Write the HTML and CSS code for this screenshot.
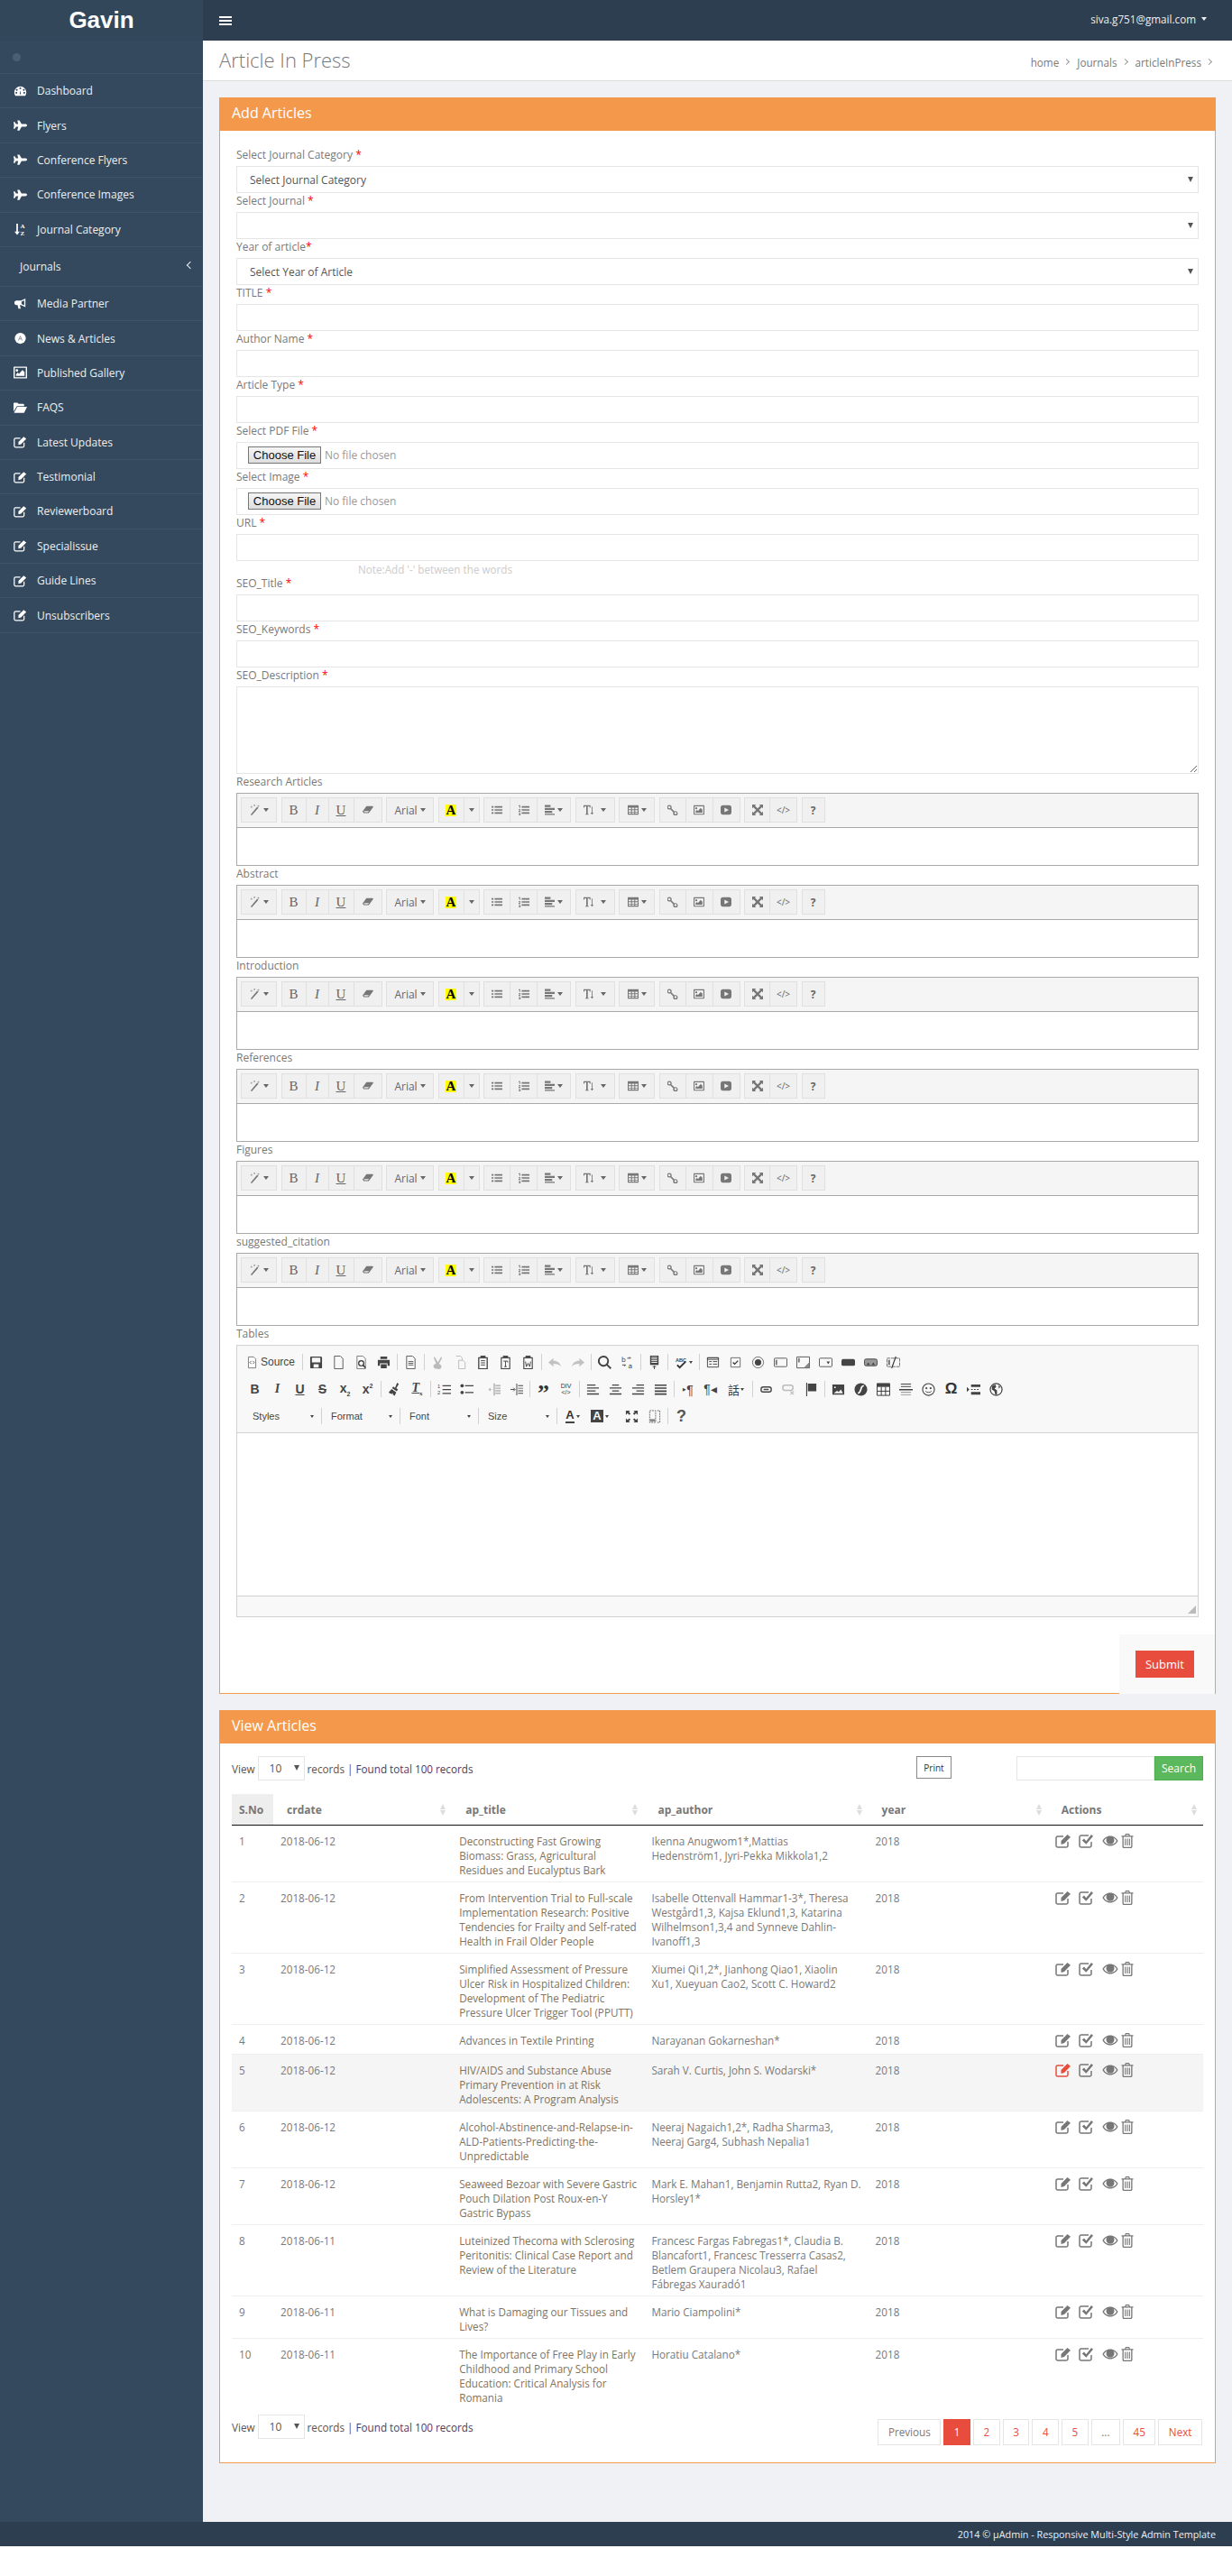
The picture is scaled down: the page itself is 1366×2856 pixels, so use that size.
FILE: index.html
```html
<!DOCTYPE html>
<html lang="en">
<head>
    <meta charset="UTF-8">
    <meta name="viewport" content="width=device-width, initial-scale=1.0">
    <title>Article In Press</title>
    <link rel="stylesheet" href="styles.css">
</head>
<body>
    <!-- icon set -->
    <svg class="icon-defs" xmlns="http://www.w3.org/2000/svg">
        <symbol id="i-dash" viewBox="0 0 16 16"><path fill-rule="evenodd" d="M8 2a7.6 7.600 0 0 0-7.600 7.600c0 1.700.5 3.200 1.400 4.400h12.400c.9-1.200 1.400-2.700 1.400-4.400A7.600 7.600 0 0 0 8 2zM7 3.500h2v2H7zM3.500 5l1.500 1.500-1.400 1.400L2.100 6.400zM12.500 5l1.400 1.400-1.500 1.500L11 6.500zM2 9h2v2H2zM12 9h2v2h-2zM7.200 12l.8-5 .8 5z"/></symbol>
        <symbol id="i-plane" viewBox="0 0 16 12"><path d="M0 2h1.500L3 4.500h2.500L4.500 0H7l2.500 4.500H14c1.100 0 2 .7 2 1.500s-.9 1.500-2 1.500H9.500L7 12H4.500l1-4.500H3L1.500 10H0l.7-4z"/></symbol>
        <symbol id="i-sort" viewBox="0 0 16 16"><path d="M3 1h2v10h2.400L4 15.500.6 11H3z"/></symbol>
        <symbol id="i-bull" viewBox="0 0 16 16"><path d="M14.500 1v11L9 9.300H7.500l1 4.700H5.700L4.600 9.300H3C1.600 9.300.5 8 .5 6.500S1.600 3.700 3 3.700h6zM13 3.500L9.500 5v3l3.500 1.600z"/></symbol>
        <symbol id="i-news" viewBox="0 0 16 16"><circle cx="8" cy="8" r="7"/><path d="M8 4.200l3 6.600H9.800L9.200 9.400H6.800l-.6 1.400H5zM7.300 8.300h1.400L8 6.500z" fill="#8d9aa8"/></symbol>
        <symbol id="i-pic" viewBox="0 0 16 14"><path fill-rule="evenodd" d="M1 0h14a1 1 0 0 1 1 1v12a1 1 0 0 1-1 1H1a1 1 0 0 1-1-1V1a1 1 0 0 1 1-1zm.500 1.500v11h13v-11zM4 3a1.500 1.500 0 1 1 0 3 1.500 1.500 0 0 1 0-3zm-1 8V9l2-2 1.500 1.500L10.500 4 13 6.500V11z"/></symbol>
        <symbol id="i-folder" viewBox="0 0 16 14"><path d="M0 2a1 1 0 0 1 1-1h3.500l1.500 1.500h5.500a1 1 0 0 1 1 1V5H4L0 11.500zM4.500 6H16l-3.500 7H.500z"/></symbol>
        <symbol id="i-edit" viewBox="0 0 18 16"><path d="M14 9v4.200a1.800 1.800 0 0 1-1.800 1.800H2.800A1.800 1.800 0 0 1 1 13.200V4.800A1.800 1.800 0 0 1 2.800 3H9" fill="none" stroke="currentColor" stroke-width="1.500"/><path d="M6.500 8L13.500 1 17 3.800 10 11l-3.500 1z"/></symbol>
        <symbol id="i-check" viewBox="0 0 18 16"><path d="M14 9v4.200a1.800 1.800 0 0 1-1.800 1.800H2.800A1.800 1.800 0 0 1 1 13.200V3.800A1.800 1.800 0 0 1 2.800 2H11" fill="none" stroke="currentColor" stroke-width="1.500"/><path d="M3.800 7.500L6 5.500l2.300 2.700L14 1l2 1.800-7.700 9z"/></symbol>
        <symbol id="i-eye" viewBox="0 0 18 14"><path fill-rule="evenodd" d="M9 1.500c4 0 7.200 2.700 8.600 5.500C16.200 9.800 13 12.500 9 12.500S1.800 9.800.400 7C1.800 4.200 5 1.500 9 1.500zM5.500 3.400C4 4.100 2.800 5.500 2 7c1.300 2.300 4 4.200 7 4.200s5.700-1.900 7-4.200c-.8-1.500-2-2.900-3.500-3.600.6.800 1 1.700 1 2.800a4.500 4.500 0 0 1-9 0c0-1.100.4-2 1-2.800z"/></symbol>
        <symbol id="i-trash" viewBox="0 0 14 16"><path fill-rule="evenodd" d="M5 0h4l1 2.200h3.500v1.400H12.500v10.600c0 1-.7 1.800-1.600 1.800H3.100c-.9 0-1.600-.8-1.600-1.800V3.600H.500V2.200H4zM5.600 1.300L5.300 2.200h3.400l-.3-.9zM2.800 3.600v10.600c0 .3.200.5.300.5h7.800c.1 0 .3-.2.300-.5V3.600zM4.200 5.500h1.100v7.500H4.200zM6.500 5.500h1.100v7.500H6.500zM8.800 5.500h1.100v7.500H8.800z"/></symbol>

        <!-- summernote toolbar -->
        <symbol id="n-magic" viewBox="0 0 14 14"><path d="M1 13L9.500 3l1.500 1.300L2.500 14z"/><path d="M11 0l.5 1.500L13 2l-1.500.5L11 4l-.5-1.500L9 2l1.500-.5zM5 0h2v2H5zM1 2h2v2H1z" opacity=".6"/></symbol>
        <symbol id="n-eraser" viewBox="0 0 14 12"><path d="M5 1h8l1 1-6 8H1.500L0 8zM2.300 7.500l-.6.8.7.7h4.500l1.500-1.500z"/></symbol>
        <symbol id="n-ul" viewBox="0 0 14 12"><path d="M0 1h2.500v2H0zM4 1h10v2H4zM0 5h2.500v2H0zM4 5h10v2H4zM0 9h2.500v2H0zM4 9h10v2H4z"/></symbol>
        <symbol id="n-ol" viewBox="0 0 14 14"><path d="M4 2h10v2H4zM4 6h10v2H4zM4 10h10v2H4zM0 1h2v3.500H1V2H0zM0 6h2.500v1L1 8.500h1.500v1H0v-1l1.500-1.500H0zM0 11h2.500v3.500H0v-1h1.500V13H.500v-.5h1V12H0z"/></symbol>
        <symbol id="n-align" viewBox="0 0 12 12"><path d="M0 0h7v2.500H0zM0 3.500h12V6H0zM0 7h9v2.500H0zM0 10.500h12V12H0z"/></symbol>
        <symbol id="n-size" viewBox="0 0 14 14"><path d="M0 1h9v3H8L7.500 2.200H5.500v9.800l1.300.5v.5H2.200v-.5l1.300-.5V2.200h-2L1 4H0z"/><path d="M10.500 2.500h1v8h1.500l-2 2.500-2-2.500h1.500z"/></symbol>
        <symbol id="n-table" viewBox="0 0 14 12"><path fill-rule="evenodd" d="M0 0h14v12H0zM1.200 3v2.200h3.200V3zm4.300 0v2.200h3V3zm4.200 0v2.200h3.100V3zM1.200 6.300v2.200h3.200V6.300zm4.300 0v2.200h3V6.300zm4.200 0v2.200h3.100V6.300zM1.200 9.500v1.300h3.200V9.500zm4.300 0v1.300h3V9.500zm4.200 0v1.300h3.100V9.500z"/></symbol>
        <symbol id="n-link" viewBox="0 0 14 14"><path d="M2.500 0.500a3 3 0 0 1 3 3c0 .5-.1 1-.4 1.400l3.900 3.900a3 3 0 1 1-1.300 1.300L3.800 6.200A3 3 0 1 1 2.500.500zm0 1.500a1.500 1.500 0 1 0 0 3 1.500 1.500 0 0 0 0-3zm8 7.500a1.500 1.500 0 1 0 0 3 1.500 1.500 0 0 0 0-3z" fill-rule="evenodd"/></symbol>
        <symbol id="n-video" viewBox="0 0 14 14"><path fill-rule="evenodd" d="M3 1h8a3 3 0 0 1 3 3v6a3 3 0 0 1-3 3H3a3 3 0 0 1-3-3V4a3 3 0 0 1 3-3zm2 3v6l5.500-3z"/></symbol>
        <symbol id="n-full" viewBox="0 0 14 14"><path d="M0 0h5L3.500 1.500 7 5l3.500-3.500L9 0h5v5l-1.500-1.500L9 7l3.500 3.500L14 9v5H9l1.500-1.500L7 9l-3.500 3.500L5 14H0V9l1.500 1.500L5 7 1.500 3.500 0 5z"/></symbol>

        <!-- ckeditor toolbar -->
        <symbol id="c-source" viewBox="0 0 16 16"><path d="M3 .5h7l3 3v12H3z" fill="#fff" stroke="#666"/><path d="M7 6L5 8l2 2M9 6l2 2-2 2" fill="none" stroke="#333"/></symbol>
        <symbol id="c-save" viewBox="0 0 16 16"><path fill-rule="evenodd" d="M2 1h12l1 1v12a1 1 0 0 1-1 1H2a1 1 0 0 1-1-1V2a1 1 0 0 1 1-1zm1 1.500V8h10V2.500zM5 10v4h6v-4z"/></symbol>
        <symbol id="c-new" viewBox="0 0 16 16"><path d="M3 .5h7l3 3v12H3z" fill="none" stroke="#555"/></symbol>
        <symbol id="c-preview" viewBox="0 0 16 16"><path d="M3 .5h7l3 3v12H3z" fill="none" stroke="#777"/><circle cx="8" cy="9" r="3" fill="none" stroke="#333" stroke-width="1.300"/><path d="M10 11l3 3.500" stroke="#333" stroke-width="1.600"/></symbol>
        <symbol id="c-print" viewBox="0 0 16 16"><path d="M4 1h8v3H4zM1 5h14v7h-2.500V9h-9v3H1zM4.500 10h7v5h-7z"/></symbol>
        <symbol id="c-doc" viewBox="0 0 16 16"><path d="M3 .5h7l3 3v12H3z" fill="none" stroke="#555"/><path d="M5 7h6M5 9h6M5 11h6" stroke="#555"/></symbol>
        <symbol id="c-cut" viewBox="0 0 16 16"><path d="M4 1l4 7 4-7 .8 2-3.800 7a3 3 0 1 1-1.500.5L8 9.500l-.5.500A3 3 0 1 1 6 9.500L3.200 3z" opacity=".35"/></symbol>
        <symbol id="c-copy" viewBox="0 0 16 16"><path d="M3 .5h5l2 2v3M6 5.500h5l2.500 2.500v7.500H6z" fill="none" stroke="#bbb"/></symbol>
        <symbol id="c-paste" viewBox="0 0 16 16"><path d="M5 0h6v2H5z"/><path d="M3 2.500h10v13H3z" fill="none" stroke="#444" stroke-width="1.400"/><path d="M5.500 6h5M5.500 8.500h5M5.500 11h5" stroke="#444"/></symbol>
        <symbol id="c-pastet" viewBox="0 0 16 16"><path d="M5 0h6v2H5z"/><path d="M3 2.500h10v13H3z" fill="none" stroke="#444" stroke-width="1.200"/><path d="M5.500 6.500h5v1.500M8 6.500V13M6.500 13h3" fill="none" stroke="#444"/></symbol>
        <symbol id="c-pastew" viewBox="0 0 16 16"><path d="M5 0h6v2H5z"/><path d="M3 2.500h10v13H3z" fill="none" stroke="#444" stroke-width="1.200"/><path d="M5 7l1 6 2-4 2 4 1-6" fill="none" stroke="#444"/></symbol>
        <symbol id="c-undo" viewBox="0 0 16 16"><path d="M6 3v3c5 0 8 2.500 9 7-1.700-2.500-4.500-3.500-9-3.500V13L0 8z" opacity=".3"/></symbol>
        <symbol id="c-redo" viewBox="0 0 16 16"><path d="M10 3v3C5 6 2 8.500 1 13c1.700-2.500 4.500-3.500 9-3.500V13l6-5z" opacity=".3"/></symbol>
        <symbol id="c-find" viewBox="0 0 16 16"><path fill-rule="evenodd" d="M6.500 0a6.500 6.500 0 0 1 5.200 10.300L16 14.500 14.500 16l-4.200-4.300A6.500 6.500 0 1 1 6.500 0zm0 2a4.500 4.500 0 1 0 0 9 4.500 4.500 0 0 0 0-9z"/></symbol>
        <symbol id="c-replace" viewBox="0 0 16 16"><path d="M8 3h4l-1.500-1.500M2 11h4l-1.500 1.500" fill="none" stroke="#444"/></symbol>
        <symbol id="c-all" viewBox="0 0 16 16"><path d="M3 0h10v11H3z"/><path d="M4.500 2h7M4.500 4h7M4.500 6h7M4.500 8h7" stroke="#f8f8f8"/><path d="M6 13h4M8 12v4" stroke="#444"/></symbol>
        <symbol id="c-spell" viewBox="0 0 16 16"><path d="M3 11l3 3 7-7" fill="none" stroke="#333" stroke-width="2"/></symbol>
        <symbol id="c-form" viewBox="0 0 16 16"><path d="M1.500 2.500h13v11h-13z" fill="none" stroke="#444"/><path d="M1.500 2.500h13v2h-13zM3.500 7h3M3.500 10h3M8 7h5M8 10h5" fill="none" stroke="#444"/></symbol>
        <symbol id="c-box" viewBox="0 0 16 16"><path d="M2.500 2.500h11v11h-11z" fill="none" stroke="#666"/><path d="M5 8l2 2 4-4" fill="none" stroke="#333" stroke-width="1.500"/></symbol>
        <symbol id="c-radio" viewBox="0 0 16 16"><circle cx="8" cy="8" r="6.500" fill="none" stroke="#666"/><circle cx="8" cy="8" r="3.800"/></symbol>
        <symbol id="c-field" viewBox="0 0 16 16"><rect x=".5" y="3" width="15" height="10" rx="1" fill="none" stroke="#555"/><path d="M3 5v6" stroke="#777" stroke-width="2"/></symbol>
        <symbol id="c-area" viewBox="0 0 16 16"><path d="M.5 1.500h15v13H.5z" fill="none" stroke="#555"/><path d="M3 3v5" stroke="#777" stroke-width="2"/><path d="M15 8v6H9z" fill="#888"/></symbol>
        <symbol id="c-select" viewBox="0 0 16 16"><rect x=".5" y="3" width="15" height="10" rx="1" fill="none" stroke="#555"/><path d="M9 7h4l-2 3z"/></symbol>
        <symbol id="c-btn" viewBox="0 0 16 16"><rect y="4" width="16" height="8" rx="2"/></symbol>
        <symbol id="c-imgbtn" viewBox="0 0 16 16"><rect x=".5" y="4" width="15" height="8" rx="2" fill="#999" stroke="#444"/><path d="M3 11l2-3 2 3zM9 11l2-3 2 3z"/></symbol>
        <symbol id="c-hidden" viewBox="0 0 16 16"><path d="M.5 3h15v10H.5z" fill="none" stroke="#666" stroke-dasharray="4 1"/><path d="M3 5v6" stroke="#666" stroke-width="2"/><path d="M11 1L6 15" stroke="#333" stroke-width="1.200"/></symbol>
        <symbol id="c-brush" viewBox="0 0 16 16"><path d="M11 0l2 1.500-3 5 2 1.500-1.500 2L5 6.500 6.500 4.500l2 1.500zM4.500 7.500l5.500 4-2 4-2-1.500 .5-2-1.500 1.500-1.500-1-.5.500L1 11.500z"/></symbol>
        <symbol id="c-ol" viewBox="0 0 16 16"><path d="M6 3h10v1.200H6zM6 7.500h10v1.200H6zM6 12h10v1.200H6z"/></symbol>
        <symbol id="c-ul" viewBox="0 0 16 16"><path d="M6 3h10v1.200H6zM6 11h10v1.200H6z"/><circle cx="2.500" cy="3.500" r="2"/><circle cx="2.500" cy="11.500" r="2"/></symbol>
        <symbol id="c-out" viewBox="0 0 16 16"><path d="M8 1h1v14H8zM10 3h6v1h-6zM10 6h6v1h-6zM10 9h6v1h-6zM10 12h6v1h-6zM7 8H2m2-2L2 8l2 2" fill="#aaa" stroke="#aaa" stroke-width=".4"/></symbol>
        <symbol id="c-in" viewBox="0 0 16 16"><path d="M8 1h1v14H8zM10 3h6v1h-6zM10 6h6v1h-6zM10 9h6v1h-6zM10 12h6v1h-6z" fill="#444"/><path d="M1 8h5M4.500 6L6.500 8l-2 2" fill="none" stroke="#444"/></symbol>
        <symbol id="c-left" viewBox="0 0 16 16"><path d="M1 2h10v1.500H1zM1 5.500h14V7H1zM1 9h10v1.500H1zM1 12.500h14V14H1z"/></symbol>
        <symbol id="c-center" viewBox="0 0 16 16"><path d="M4 2h8v1.500H4zM1 5.500h14V7H1zM4 9h8v1.500H4zM1 12.500h14V14H1z"/></symbol>
        <symbol id="c-right" viewBox="0 0 16 16"><path d="M6 2h9v1.500H6zM1 5.500h14V7H1zM6 9h9v1.500H6zM1 12.500h14V14H1z"/></symbol>
        <symbol id="c-just" viewBox="0 0 16 16"><path d="M1 2h14v1.800H1zM1 5.500h14v1.800H1zM1 9h14v1.800H1zM1 12.500h14v1.800H1z"/></symbol>
        <symbol id="c-chain" viewBox="0 0 16 16"><rect x="2" y="5" width="12" height="6" rx="2.500" fill="none" stroke="#444" stroke-width="1.500"/><path d="M5 8h6" stroke="#444" stroke-width="1.500"/></symbol>
        <symbol id="c-unchain" viewBox="0 0 16 16"><rect x="1" y="3" width="12" height="6" rx="2.500" fill="none" stroke="#bbb" stroke-width="1.600"/><path d="M10 10l4 4M14 10l-4 4" stroke="#bbb" stroke-width="1.300"/></symbol>
        <symbol id="c-flag" viewBox="0 0 16 16"><path d="M2 0h1.200v16H2zM4 1h10v9H4z"/></symbol>
        <symbol id="c-image" viewBox="0 0 16 16"><path fill-rule="evenodd" d="M1 2h14v12H1zM4 4.500a1 1 0 1 0 0 2 1 1 0 0 0 0-2zM2.500 12.500h11L11 8l-2.500 3-2-1.500z"/></symbol>
        <symbol id="c-flash" viewBox="0 0 16 16"><circle cx="8" cy="8" r="7.500"/><path d="M11.500 3.500C8.500 4 8.500 6 8 8S6.500 12 4.500 12.500" fill="none" stroke="#fff" stroke-width="1.800"/></symbol>
        <symbol id="c-table" viewBox="0 0 16 16"><path d="M.5 1h15v14H.5z" fill="none" stroke="#333"/><path d="M.5 1h15v4H.5z"/><path d="M.5 10h15M5.500 5v10M10.500 5v10" stroke="#333" fill="none"/></symbol>
        <symbol id="c-hr" viewBox="0 0 16 16"><path d="M2 1h12v1H2zM2 4h12v1H2zM0 7.500h16v1.500H0z"/><path d="M2 11h12v1H2zM2 14h12v1H2z" opacity=".6"/></symbol>
        <symbol id="c-smile" viewBox="0 0 16 16"><circle cx="8" cy="8" r="7" fill="none" stroke="#444" stroke-width="1.200"/><circle cx="5.500" cy="6.500" r="1.200"/><circle cx="10.500" cy="6.500" r="1.200"/><path d="M4.500 10c1.500 2 5.500 2 7 0" fill="none" stroke="#444"/></symbol>
        <symbol id="c-break" viewBox="0 0 16 16"><path d="M5 2h11v3H5zM5 11h11v3H5zM5 7.500h2v1H5zM8.500 7.500h2v1h-2zM12 7.500h2v1h-2zM0 5l3 3-3 3z"/></symbol>
        <symbol id="c-globe" viewBox="0 0 16 16"><circle cx="8" cy="8" r="7" fill="none" stroke="#444" stroke-width="1.300"/><path d="M3 4l4-2 1 3-2 2 3 2v5l-2 0-1-4-3-2zM11 3l2 2-2 2z"/></symbol>
        <symbol id="c-max" viewBox="0 0 16 16"><path d="M1 1h5L4.500 2.500 6.500 4.500 5 6 3 4 1 6zM15 1v5l-2-2-2 2-1.500-1.500 2-2L10 1zM1 15v-5l2 2 2-2 1.500 1.500-2 2L6 15zM15 15h-5l1.500-1.500-2-2L11 10l2 2 2-2z"/></symbol>
        <symbol id="c-blocks" viewBox="0 0 16 16"><path d="M2.500 1h7v14h-7zM11.500 1h3M11.500 15h3M14.500 1v14" fill="none" stroke="#666" stroke-dasharray="2 1"/><path d="M3 11h6v3H3z" fill="#888"/></symbol>
    </svg>

    <div class="layout">
        <!-- Sidebar -->
        <aside class="sidebar">
            <div class="logo">Gavin</div>
            <div class="user-dot-row"><span class="user-dot"></span></div>
            <ul class="side-nav">
                <li><svg class="side-icon"><use href="#i-dash"/></svg>Dashboard</li>
                <li><svg class="side-icon"><use href="#i-plane"/></svg>Flyers</li>
                <li><svg class="side-icon"><use href="#i-plane"/></svg>Conference Flyers</li>
                <li><svg class="side-icon"><use href="#i-plane"/></svg>Conference Images</li>
                <li><svg class="side-icon" viewBox="0 0 16 16"><use href="#i-sort"/><text x="8" y="7" class="icon-text">A</text><text x="8" y="15.500" class="icon-text">Z</text></svg>Journal Category</li>
                <li class="side-sub">Journals<span class="side-chev"></span></li>
                <li><svg class="side-icon"><use href="#i-bull"/></svg>Media Partner</li>
                <li><svg class="side-icon"><use href="#i-news"/></svg>News &amp; Articles</li>
                <li><svg class="side-icon"><use href="#i-pic"/></svg>Published Gallery</li>
                <li><svg class="side-icon"><use href="#i-folder"/></svg>FAQS</li>
                <li><svg class="side-icon"><use href="#i-edit"/></svg>Latest Updates</li>
                <li><svg class="side-icon"><use href="#i-edit"/></svg>Testimonial</li>
                <li><svg class="side-icon"><use href="#i-edit"/></svg>Reviewerboard</li>
                <li><svg class="side-icon"><use href="#i-edit"/></svg>Specialissue</li>
                <li><svg class="side-icon"><use href="#i-edit"/></svg>Guide Lines</li>
                <li><svg class="side-icon"><use href="#i-edit"/></svg>Unsubscribers</li>
            </ul>
        </aside>

        <div class="main">
            <!-- Top bar -->
            <header class="topbar">
                <div class="burger"><span></span><span></span><span></span></div>
                <div class="user-menu">siva.g751@gmail.com<span class="user-caret"></span></div>
            </header>

            <div class="title-bar">
                <h1>Article In Press</h1>
                <div class="breadcrumb">
                    <span>home</span><span class="crumb-chev"></span>
                    <span>Journals</span><span class="crumb-chev"></span>
                    <span>articleInPress</span><span class="crumb-chev"></span>
                </div>
            </div>

            <div class="content">
                <!-- Add Articles -->
                <section class="panel">
                    <h2 class="panel-head">Add Articles</h2>
                    <form class="article-form">
                        <label>Select Journal Category <span class="req">*</span></label>
                        <div class="select-wrap"><select class="field"><option>Select Journal Category</option></select></div>
                        <label>Select Journal <span class="req">*</span></label>
                        <div class="select-wrap"><select class="field"><option></option></select></div>
                        <label>Year of article<span class="req">*</span></label>
                        <div class="select-wrap"><select class="field"><option>Select Year of Article</option></select></div>
                        <label>TITLE <span class="req">*</span></label>
                        <input class="field" type="text">
                        <label>Author Name <span class="req">*</span></label>
                        <input class="field" type="text">
                        <label>Article Type <span class="req">*</span></label>
                        <input class="field" type="text">
                        <label>Select PDF File <span class="req">*</span></label>
                        <input class="field file-field" type="file">
                        <label>Select Image <span class="req">*</span></label>
                        <input class="field file-field" type="file">
                        <label>URL <span class="req">*</span></label>
                        <input class="field" type="text">
                        <p class="note">Note:Add '-' between the words</p>
                        <label>SEO_Title <span class="req">*</span></label>
                        <input class="field" type="text">
                        <label>SEO_Keywords <span class="req">*</span></label>
                        <input class="field" type="text">
                        <label>SEO_Description <span class="req">*</span></label>
                        <textarea class="field area-field"></textarea>

                        <label>Research Articles</label>
                        <div class="note-editor">
                            <div class="note-toolbar">
                                <div class="note-group"><button type="button" class="nb w40"><svg class="ni"><use href="#n-magic"/></svg><i class="car"></i></button></div>
                                <div class="note-group"><button type="button" class="nb w28 nb-serif"><b>B</b></button><button type="button" class="nb w25 nb-serif"><i>I</i></button><button type="button" class="nb w28 nb-serif"><u>U</u></button><button type="button" class="nb w31"><svg class="ni"><use href="#n-eraser"/></svg></button></div>
                                <div class="note-group"><button type="button" class="nb w53">Arial<i class="car"></i></button></div>
                                <div class="note-group"><button type="button" class="nb w29 nb-serif"><b class="hl">A</b></button><button type="button" class="nb w17"><i class="car"></i></button></div>
                                <div class="note-group"><button type="button" class="nb w30"><svg class="ni"><use href="#n-ul"/></svg></button><button type="button" class="nb w30"><svg class="ni"><use href="#n-ol"/></svg></button><button type="button" class="nb w37"><svg class="ni ni-s"><use href="#n-align"/></svg><i class="car"></i></button></div>
                                <div class="note-group"><button type="button" class="nb w44"><svg class="ni"><use href="#n-size"/></svg><i class="car car-far"></i></button></div>
                                <div class="note-group"><button type="button" class="nb w40"><svg class="ni"><use href="#n-table"/></svg><i class="car"></i></button></div>
                                <div class="note-group"><button type="button" class="nb w30"><svg class="ni"><use href="#n-link"/></svg></button><button type="button" class="nb w30"><svg class="ni"><use href="#i-pic"/></svg></button><button type="button" class="nb w30"><svg class="ni"><use href="#n-video"/></svg></button></div>
                                <div class="note-group"><button type="button" class="nb w29"><svg class="ni"><use href="#n-full"/></svg></button><button type="button" class="nb w30 nb-code">&lt;/&gt;</button></div>
                                <div class="note-group"><button type="button" class="nb w26"><b>?</b></button></div>
                            </div>
                            <div class="note-body"></div>
                        </div>

                        <label>Abstract</label>
                        <div class="note-editor">
                            <div class="note-toolbar">
                                <div class="note-group"><button type="button" class="nb w40"><svg class="ni"><use href="#n-magic"/></svg><i class="car"></i></button></div>
                                <div class="note-group"><button type="button" class="nb w28 nb-serif"><b>B</b></button><button type="button" class="nb w25 nb-serif"><i>I</i></button><button type="button" class="nb w28 nb-serif"><u>U</u></button><button type="button" class="nb w31"><svg class="ni"><use href="#n-eraser"/></svg></button></div>
                                <div class="note-group"><button type="button" class="nb w53">Arial<i class="car"></i></button></div>
                                <div class="note-group"><button type="button" class="nb w29 nb-serif"><b class="hl">A</b></button><button type="button" class="nb w17"><i class="car"></i></button></div>
                                <div class="note-group"><button type="button" class="nb w30"><svg class="ni"><use href="#n-ul"/></svg></button><button type="button" class="nb w30"><svg class="ni"><use href="#n-ol"/></svg></button><button type="button" class="nb w37"><svg class="ni ni-s"><use href="#n-align"/></svg><i class="car"></i></button></div>
                                <div class="note-group"><button type="button" class="nb w44"><svg class="ni"><use href="#n-size"/></svg><i class="car car-far"></i></button></div>
                                <div class="note-group"><button type="button" class="nb w40"><svg class="ni"><use href="#n-table"/></svg><i class="car"></i></button></div>
                                <div class="note-group"><button type="button" class="nb w30"><svg class="ni"><use href="#n-link"/></svg></button><button type="button" class="nb w30"><svg class="ni"><use href="#i-pic"/></svg></button><button type="button" class="nb w30"><svg class="ni"><use href="#n-video"/></svg></button></div>
                                <div class="note-group"><button type="button" class="nb w29"><svg class="ni"><use href="#n-full"/></svg></button><button type="button" class="nb w30 nb-code">&lt;/&gt;</button></div>
                                <div class="note-group"><button type="button" class="nb w26"><b>?</b></button></div>
                            </div>
                            <div class="note-body"></div>
                        </div>

                        <label>Introduction</label>
                        <div class="note-editor">
                            <div class="note-toolbar">
                                <div class="note-group"><button type="button" class="nb w40"><svg class="ni"><use href="#n-magic"/></svg><i class="car"></i></button></div>
                                <div class="note-group"><button type="button" class="nb w28 nb-serif"><b>B</b></button><button type="button" class="nb w25 nb-serif"><i>I</i></button><button type="button" class="nb w28 nb-serif"><u>U</u></button><button type="button" class="nb w31"><svg class="ni"><use href="#n-eraser"/></svg></button></div>
                                <div class="note-group"><button type="button" class="nb w53">Arial<i class="car"></i></button></div>
                                <div class="note-group"><button type="button" class="nb w29 nb-serif"><b class="hl">A</b></button><button type="button" class="nb w17"><i class="car"></i></button></div>
                                <div class="note-group"><button type="button" class="nb w30"><svg class="ni"><use href="#n-ul"/></svg></button><button type="button" class="nb w30"><svg class="ni"><use href="#n-ol"/></svg></button><button type="button" class="nb w37"><svg class="ni ni-s"><use href="#n-align"/></svg><i class="car"></i></button></div>
                                <div class="note-group"><button type="button" class="nb w44"><svg class="ni"><use href="#n-size"/></svg><i class="car car-far"></i></button></div>
                                <div class="note-group"><button type="button" class="nb w40"><svg class="ni"><use href="#n-table"/></svg><i class="car"></i></button></div>
                                <div class="note-group"><button type="button" class="nb w30"><svg class="ni"><use href="#n-link"/></svg></button><button type="button" class="nb w30"><svg class="ni"><use href="#i-pic"/></svg></button><button type="button" class="nb w30"><svg class="ni"><use href="#n-video"/></svg></button></div>
                                <div class="note-group"><button type="button" class="nb w29"><svg class="ni"><use href="#n-full"/></svg></button><button type="button" class="nb w30 nb-code">&lt;/&gt;</button></div>
                                <div class="note-group"><button type="button" class="nb w26"><b>?</b></button></div>
                            </div>
                            <div class="note-body"></div>
                        </div>

                        <label>References</label>
                        <div class="note-editor">
                            <div class="note-toolbar">
                                <div class="note-group"><button type="button" class="nb w40"><svg class="ni"><use href="#n-magic"/></svg><i class="car"></i></button></div>
                                <div class="note-group"><button type="button" class="nb w28 nb-serif"><b>B</b></button><button type="button" class="nb w25 nb-serif"><i>I</i></button><button type="button" class="nb w28 nb-serif"><u>U</u></button><button type="button" class="nb w31"><svg class="ni"><use href="#n-eraser"/></svg></button></div>
                                <div class="note-group"><button type="button" class="nb w53">Arial<i class="car"></i></button></div>
                                <div class="note-group"><button type="button" class="nb w29 nb-serif"><b class="hl">A</b></button><button type="button" class="nb w17"><i class="car"></i></button></div>
                                <div class="note-group"><button type="button" class="nb w30"><svg class="ni"><use href="#n-ul"/></svg></button><button type="button" class="nb w30"><svg class="ni"><use href="#n-ol"/></svg></button><button type="button" class="nb w37"><svg class="ni ni-s"><use href="#n-align"/></svg><i class="car"></i></button></div>
                                <div class="note-group"><button type="button" class="nb w44"><svg class="ni"><use href="#n-size"/></svg><i class="car car-far"></i></button></div>
                                <div class="note-group"><button type="button" class="nb w40"><svg class="ni"><use href="#n-table"/></svg><i class="car"></i></button></div>
                                <div class="note-group"><button type="button" class="nb w30"><svg class="ni"><use href="#n-link"/></svg></button><button type="button" class="nb w30"><svg class="ni"><use href="#i-pic"/></svg></button><button type="button" class="nb w30"><svg class="ni"><use href="#n-video"/></svg></button></div>
                                <div class="note-group"><button type="button" class="nb w29"><svg class="ni"><use href="#n-full"/></svg></button><button type="button" class="nb w30 nb-code">&lt;/&gt;</button></div>
                                <div class="note-group"><button type="button" class="nb w26"><b>?</b></button></div>
                            </div>
                            <div class="note-body"></div>
                        </div>

                        <label>Figures</label>
                        <div class="note-editor">
                            <div class="note-toolbar">
                                <div class="note-group"><button type="button" class="nb w40"><svg class="ni"><use href="#n-magic"/></svg><i class="car"></i></button></div>
                                <div class="note-group"><button type="button" class="nb w28 nb-serif"><b>B</b></button><button type="button" class="nb w25 nb-serif"><i>I</i></button><button type="button" class="nb w28 nb-serif"><u>U</u></button><button type="button" class="nb w31"><svg class="ni"><use href="#n-eraser"/></svg></button></div>
                                <div class="note-group"><button type="button" class="nb w53">Arial<i class="car"></i></button></div>
                                <div class="note-group"><button type="button" class="nb w29 nb-serif"><b class="hl">A</b></button><button type="button" class="nb w17"><i class="car"></i></button></div>
                                <div class="note-group"><button type="button" class="nb w30"><svg class="ni"><use href="#n-ul"/></svg></button><button type="button" class="nb w30"><svg class="ni"><use href="#n-ol"/></svg></button><button type="button" class="nb w37"><svg class="ni ni-s"><use href="#n-align"/></svg><i class="car"></i></button></div>
                                <div class="note-group"><button type="button" class="nb w44"><svg class="ni"><use href="#n-size"/></svg><i class="car car-far"></i></button></div>
                                <div class="note-group"><button type="button" class="nb w40"><svg class="ni"><use href="#n-table"/></svg><i class="car"></i></button></div>
                                <div class="note-group"><button type="button" class="nb w30"><svg class="ni"><use href="#n-link"/></svg></button><button type="button" class="nb w30"><svg class="ni"><use href="#i-pic"/></svg></button><button type="button" class="nb w30"><svg class="ni"><use href="#n-video"/></svg></button></div>
                                <div class="note-group"><button type="button" class="nb w29"><svg class="ni"><use href="#n-full"/></svg></button><button type="button" class="nb w30 nb-code">&lt;/&gt;</button></div>
                                <div class="note-group"><button type="button" class="nb w26"><b>?</b></button></div>
                            </div>
                            <div class="note-body"></div>
                        </div>

                        <label>suggested_citation</label>
                        <div class="note-editor">
                            <div class="note-toolbar">
                                <div class="note-group"><button type="button" class="nb w40"><svg class="ni"><use href="#n-magic"/></svg><i class="car"></i></button></div>
                                <div class="note-group"><button type="button" class="nb w28 nb-serif"><b>B</b></button><button type="button" class="nb w25 nb-serif"><i>I</i></button><button type="button" class="nb w28 nb-serif"><u>U</u></button><button type="button" class="nb w31"><svg class="ni"><use href="#n-eraser"/></svg></button></div>
                                <div class="note-group"><button type="button" class="nb w53">Arial<i class="car"></i></button></div>
                                <div class="note-group"><button type="button" class="nb w29 nb-serif"><b class="hl">A</b></button><button type="button" class="nb w17"><i class="car"></i></button></div>
                                <div class="note-group"><button type="button" class="nb w30"><svg class="ni"><use href="#n-ul"/></svg></button><button type="button" class="nb w30"><svg class="ni"><use href="#n-ol"/></svg></button><button type="button" class="nb w37"><svg class="ni ni-s"><use href="#n-align"/></svg><i class="car"></i></button></div>
                                <div class="note-group"><button type="button" class="nb w44"><svg class="ni"><use href="#n-size"/></svg><i class="car car-far"></i></button></div>
                                <div class="note-group"><button type="button" class="nb w40"><svg class="ni"><use href="#n-table"/></svg><i class="car"></i></button></div>
                                <div class="note-group"><button type="button" class="nb w30"><svg class="ni"><use href="#n-link"/></svg></button><button type="button" class="nb w30"><svg class="ni"><use href="#i-pic"/></svg></button><button type="button" class="nb w30"><svg class="ni"><use href="#n-video"/></svg></button></div>
                                <div class="note-group"><button type="button" class="nb w29"><svg class="ni"><use href="#n-full"/></svg></button><button type="button" class="nb w30 nb-code">&lt;/&gt;</button></div>
                                <div class="note-group"><button type="button" class="nb w26"><b>?</b></button></div>
                            </div>
                            <div class="note-body"></div>
                        </div>

                        <label>Tables</label>
                        <div class="cke">
                            <div class="cke-top">
                                <div class="cke-row cke-row-first">
                                    <span class="cb cb-source"><svg class="ci"><use href="#c-source"/></svg>Source</span><i class="cs"></i>
                                    <span class="cb"><svg class="ci"><use href="#c-save"/></svg></span><span class="cb"><svg class="ci"><use href="#c-new"/></svg></span><span class="cb"><svg class="ci"><use href="#c-preview"/></svg></span><span class="cb"><svg class="ci"><use href="#c-print"/></svg></span><i class="cs"></i>
                                    <span class="cb"><svg class="ci"><use href="#c-doc"/></svg></span><i class="cs"></i>
                                    <span class="cb"><svg class="ci"><use href="#c-cut"/></svg></span><span class="cb"><svg class="ci"><use href="#c-copy"/></svg></span><span class="cb"><svg class="ci"><use href="#c-paste"/></svg></span><span class="cb"><svg class="ci"><use href="#c-pastet"/></svg></span><span class="cb"><svg class="ci"><use href="#c-pastew"/></svg></span><i class="cs"></i>
                                    <span class="cb"><svg class="ci"><use href="#c-undo"/></svg></span><span class="cb"><svg class="ci"><use href="#c-redo"/></svg></span><i class="cs"></i>
                                    <span class="cb"><svg class="ci"><use href="#c-find"/></svg></span><span class="cb"><svg class="ci" viewBox="0 0 16 16"><use href="#c-replace"/><text x="1" y="7" class="c-mini">b</text><text x="9" y="15" class="c-mini">a</text></svg></span><i class="cs"></i>
                                    <span class="cb"><svg class="ci"><use href="#c-all"/></svg></span><i class="cs"></i>
                                    <span class="cb cb-wide"><svg class="ci" viewBox="0 0 16 16"><use href="#c-spell"/><text x="1" y="7" class="c-mini2">ABC</text></svg><i class="cc"></i></span><i class="cs"></i>
                                    <span class="cb"><svg class="ci"><use href="#c-form"/></svg></span><span class="cb"><svg class="ci"><use href="#c-box"/></svg></span><span class="cb"><svg class="ci"><use href="#c-radio"/></svg></span><span class="cb"><svg class="ci"><use href="#c-field"/></svg></span><span class="cb"><svg class="ci"><use href="#c-area"/></svg></span><span class="cb"><svg class="ci"><use href="#c-select"/></svg></span><span class="cb"><svg class="ci"><use href="#c-btn"/></svg></span><span class="cb"><svg class="ci"><use href="#c-imgbtn"/></svg></span><span class="cb"><svg class="ci"><use href="#c-hidden"/></svg></span>
                                </div>
                                <div class="cke-row">
                                    <span class="cb cb-txt"><b>B</b></span><span class="cb cb-txt cb-serif"><b><i>I</i></b></span><span class="cb cb-txt"><b><u>U</u></b></span><span class="cb cb-txt"><b><s>S</s></b></span><span class="cb cb-txt"><b>x<sub>2</sub></b></span><span class="cb cb-txt"><b>x<sup>2</sup></b></span><i class="cs"></i>
                                    <span class="cb"><svg class="ci"><use href="#c-brush"/></svg></span><span class="cb cb-txt cb-serif"><b><i><u>T</u></i><sub>x</sub></b></span><i class="cs"></i>
                                    <span class="cb"><svg class="ci" viewBox="0 0 16 16"><use href="#c-ol"/><text x="0" y="6" class="c-mini3">1</text><text x="0" y="14" class="c-mini3">2</text></svg></span><span class="cb"><svg class="ci"><use href="#c-ul"/></svg></span><i class="cgap"></i>
                                    <span class="cb"><svg class="ci"><use href="#c-out"/></svg></span><span class="cb"><svg class="ci"><use href="#c-in"/></svg></span><i class="cs"></i>
                                    <span class="cb cb-quote">&#8221;</span><span class="cb cb-div">DIV<br>&lt;/&gt;</span><i class="cs"></i>
                                    <span class="cb"><svg class="ci"><use href="#c-left"/></svg></span><span class="cb"><svg class="ci"><use href="#c-center"/></svg></span><span class="cb"><svg class="ci"><use href="#c-right"/></svg></span><span class="cb"><svg class="ci"><use href="#c-just"/></svg></span><i class="cs"></i>
                                    <span class="cb cb-txt">&#8227;&#182;</span><span class="cb cb-txt">&#182;&#9666;</span><span class="cb cb-lang">&#35441;<i class="cc"></i></span><i class="cs"></i>
                                    <span class="cb"><svg class="ci"><use href="#c-chain"/></svg></span><span class="cb"><svg class="ci"><use href="#c-unchain"/></svg></span><span class="cb"><svg class="ci"><use href="#c-flag"/></svg></span><i class="cs"></i>
                                    <span class="cb"><svg class="ci"><use href="#c-image"/></svg></span><span class="cb"><svg class="ci"><use href="#c-flash"/></svg></span><span class="cb"><svg class="ci"><use href="#c-table"/></svg></span><span class="cb"><svg class="ci"><use href="#c-hr"/></svg></span><span class="cb"><svg class="ci"><use href="#c-smile"/></svg></span><span class="cb cb-omega">&#937;</span><span class="cb"><svg class="ci"><use href="#c-break"/></svg></span><span class="cb"><svg class="ci"><use href="#c-globe"/></svg></span>
                                </div>
                                <div class="cke-row cke-row-last">
                                    <span class="combo">Styles<i class="cc"></i></span><i class="cs"></i>
                                    <span class="combo">Format<i class="cc"></i></span><i class="cs"></i>
                                    <span class="combo">Font<i class="cc"></i></span><i class="cs"></i>
                                    <span class="combo">Size<i class="cc"></i></span><i class="cs"></i>
                                    <span class="cb cb-color"><b class="ca">A</b><i class="cc"></i></span><span class="cb cb-color"><b class="ca ca-bg">A</b><i class="cc"></i></span>
                                    <span class="cb cb-max"><svg class="ci"><use href="#c-max"/></svg></span><span class="cb"><svg class="ci"><use href="#c-blocks"/></svg></span><i class="cs"></i>
                                    <span class="cb cb-help">?</span>
                                </div>
                            </div>
                            <div class="cke-body"></div>
                            <div class="cke-bottom"><span class="cke-resize"></span></div>
                        </div>

                        <div class="form-actions">
                            <div class="submit-box"><button type="button" class="btn-submit">Submit</button></div>
                        </div>
                    </form>
                </section>

                <!-- View Articles -->
                <section class="panel">
                    <h2 class="panel-head">View Articles</h2>
                    <div class="list-body">
                        <div class="list-tools">
                            <div class="records">
                                <span>View</span>
                                <div class="select-wrap select-small"><select class="field"><option>10</option></select></div>
                                <span>records <em>| Found total 100 records</em></span>
                            </div>
                            <button type="button" class="btn-print">Print</button>
                            <div class="search-box"><input type="text"><button type="button" class="btn-search">Search</button></div>
                        </div>

                        <table class="articles">
                            <colgroup><col class="col-no"><col class="col-date"><col class="col-title"><col class="col-author"><col class="col-year"><col class="col-actions"></colgroup>
                            <thead>
                                <tr>
                                    <th class="th-no">S.No</th>
                                    <th>crdate<span class="sort"></span></th>
                                    <th>ap_title<span class="sort"></span></th>
                                    <th>ap_author<span class="sort"></span></th>
                                    <th>year<span class="sort"></span></th>
                                    <th>Actions<span class="sort"></span></th>
                                </tr>
                            </thead>
                            <tbody>
                                <tr>
                                    <td>1</td><td>2018-06-12</td>
                                    <td>Deconstructing Fast Growing Biomass: Grass, Agricultural Residues and Eucalyptus Bark</td>
                                    <td>Ikenna Anugwom1*,Mattias Hedenström1, Jyri-Pekka Mikkola1,2</td>
                                    <td>2018</td>
                                    <td class="td-actions"><div class="actions"><svg class="a-edit"><use href="#i-edit"/></svg><svg class="a-check"><use href="#i-check"/></svg><svg class="a-eye"><use href="#i-eye"/></svg><svg class="a-trash"><use href="#i-trash"/></svg></div></td>
                                </tr>
                                <tr>
                                    <td>2</td><td>2018-06-12</td>
                                    <td>From Intervention Trial to Full-scale Implementation Research: Positive Tendencies for Frailty and Self-rated Health in Frail Older People</td>
                                    <td>Isabelle Ottenvall Hammar1-3*, Theresa Westgård1,3, Kajsa Eklund1,3, Katarina Wilhelmson1,3,4 and Synneve Dahlin-Ivanoff1,3</td>
                                    <td>2018</td>
                                    <td class="td-actions"><div class="actions"><svg class="a-edit"><use href="#i-edit"/></svg><svg class="a-check"><use href="#i-check"/></svg><svg class="a-eye"><use href="#i-eye"/></svg><svg class="a-trash"><use href="#i-trash"/></svg></div></td>
                                </tr>
                                <tr>
                                    <td>3</td><td>2018-06-12</td>
                                    <td>Simplified Assessment of Pressure Ulcer Risk in Hospitalized Children: Development of The Pediatric Pressure Ulcer Trigger Tool (PPUTT)</td>
                                    <td>Xiumei Qi1,2*, Jianhong Qiao1, Xiaolin Xu1, Xueyuan Cao2, Scott C. Howard2</td>
                                    <td>2018</td>
                                    <td class="td-actions"><div class="actions"><svg class="a-edit"><use href="#i-edit"/></svg><svg class="a-check"><use href="#i-check"/></svg><svg class="a-eye"><use href="#i-eye"/></svg><svg class="a-trash"><use href="#i-trash"/></svg></div></td>
                                </tr>
                                <tr>
                                    <td>4</td><td>2018-06-12</td>
                                    <td>Advances in Textile Printing</td>
                                    <td>Narayanan Gokarneshan*</td>
                                    <td>2018</td>
                                    <td class="td-actions"><div class="actions"><svg class="a-edit"><use href="#i-edit"/></svg><svg class="a-check"><use href="#i-check"/></svg><svg class="a-eye"><use href="#i-eye"/></svg><svg class="a-trash"><use href="#i-trash"/></svg></div></td>
                                </tr>
                                <tr class="row-hover">
                                    <td>5</td><td>2018-06-12</td>
                                    <td>HIV/AIDS and Substance Abuse Primary Prevention in at Risk Adolescents: A Program Analysis</td>
                                    <td>Sarah V. Curtis, John S. Wodarski*</td>
                                    <td>2018</td>
                                    <td class="td-actions"><div class="actions"><svg class="a-edit"><use href="#i-edit"/></svg><svg class="a-check"><use href="#i-check"/></svg><svg class="a-eye"><use href="#i-eye"/></svg><svg class="a-trash"><use href="#i-trash"/></svg></div></td>
                                </tr>
                                <tr>
                                    <td>6</td><td>2018-06-12</td>
                                    <td>Alcohol-Abstinence-and-Relapse-in-ALD-Patients-Predicting-the-Unpredictable</td>
                                    <td>Neeraj Nagaich1,2*, Radha Sharma3, Neeraj Garg4, Subhash Nepalia1</td>
                                    <td>2018</td>
                                    <td class="td-actions"><div class="actions"><svg class="a-edit"><use href="#i-edit"/></svg><svg class="a-check"><use href="#i-check"/></svg><svg class="a-eye"><use href="#i-eye"/></svg><svg class="a-trash"><use href="#i-trash"/></svg></div></td>
                                </tr>
                                <tr>
                                    <td>7</td><td>2018-06-12</td>
                                    <td>Seaweed Bezoar with Severe Gastric Pouch Dilation Post Roux-en-Y Gastric Bypass</td>
                                    <td>Mark E. Mahan1, Benjamin Rutta2, Ryan D. Horsley1*</td>
                                    <td>2018</td>
                                    <td class="td-actions"><div class="actions"><svg class="a-edit"><use href="#i-edit"/></svg><svg class="a-check"><use href="#i-check"/></svg><svg class="a-eye"><use href="#i-eye"/></svg><svg class="a-trash"><use href="#i-trash"/></svg></div></td>
                                </tr>
                                <tr>
                                    <td>8</td><td>2018-06-11</td>
                                    <td>Luteinized Thecoma with Sclerosing Peritonitis: Clinical Case Report and Review of the Literature</td>
                                    <td>Francesc Fargas Fabregas1*, Claudia B. Blancafort1, Francesc Tresserra Casas2, Betlem Graupera Nicolau3, Rafael Fábregas Xauradó1</td>
                                    <td>2018</td>
                                    <td class="td-actions"><div class="actions"><svg class="a-edit"><use href="#i-edit"/></svg><svg class="a-check"><use href="#i-check"/></svg><svg class="a-eye"><use href="#i-eye"/></svg><svg class="a-trash"><use href="#i-trash"/></svg></div></td>
                                </tr>
                                <tr>
                                    <td>9</td><td>2018-06-11</td>
                                    <td>What is Damaging our Tissues and Lives?</td>
                                    <td>Mario Ciampolini*</td>
                                    <td>2018</td>
                                    <td class="td-actions"><div class="actions"><svg class="a-edit"><use href="#i-edit"/></svg><svg class="a-check"><use href="#i-check"/></svg><svg class="a-eye"><use href="#i-eye"/></svg><svg class="a-trash"><use href="#i-trash"/></svg></div></td>
                                </tr>
                                <tr class="row-last">
                                    <td>10</td><td>2018-06-11</td>
                                    <td>The Importance of Free Play in Early Childhood and Primary School Education: Critical Analysis for Romania</td>
                                    <td>Horatiu Catalano*</td>
                                    <td>2018</td>
                                    <td class="td-actions"><div class="actions"><svg class="a-edit"><use href="#i-edit"/></svg><svg class="a-check"><use href="#i-check"/></svg><svg class="a-eye"><use href="#i-eye"/></svg><svg class="a-trash"><use href="#i-trash"/></svg></div></td>
                                </tr>
                            </tbody>
                        </table>

                        <div class="list-foot">
                            <div class="records">
                                <span>View</span>
                                <div class="select-wrap select-small"><select class="field"><option>10</option></select></div>
                                <span>records <em>| Found total 100 records</em></span>
                            </div>
                            <ul class="pagination">
                                <li class="page-muted">Previous</li>
                                <li class="page-on">1</li>
                                <li>2</li>
                                <li>3</li>
                                <li>4</li>
                                <li>5</li>
                                <li class="page-muted">...</li>
                                <li>45</li>
                                <li>Next</li>
                            </ul>
                        </div>
                    </div>
                </section>
            </div>
        </div>
    </div>

    <footer class="page-foot">2014 © µAdmin - Responsive Multi-Style Admin Template</footer>
</body>
</html>
```

FILE: styles.css
```css
/* base */
* {
    box-sizing: border-box;
}

body {
    margin: 0;
    background: #fff;
    font-family: "Open Sans", sans-serif;
    font-size: 12px;
    color: #797979;
}

.icon-defs {
    position: absolute;
    width: 0;
    height: 0;
}

.icon-text {
    font: bold 8px "Liberation Serif", serif;
}

.layout {
    display: flex;
    height: 2796px;
}

/* sidebar */
.sidebar {
    flex: 0 0 225px;
    background: #34495e;
    color: #ecf0f1;
}

.logo {
    height: 45px;
    background: #33475b;
    color: #fff;
    font: bold 26px/44px "Liberation Sans", sans-serif;
    text-align: center;
}

.user-dot-row {
    height: 37px;
    padding: 14px 0 0 14px;
    border-bottom: 1px solid #3c5369;
}

.user-dot {
    display: block;
    width: 9px;
    height: 9px;
    border-radius: 50%;
    background: #4a5f74;
}

.side-nav {
    list-style: none;
    margin: 0;
    padding: 0;
}

.side-nav li {
    display: flex;
    align-items: center;
    height: 38.4px;
    padding-left: 15px;
    border-bottom: 1px solid #3c5369;
}

.side-icon {
    flex: 0 0 15px;
    width: 15px;
    height: 14px;
    margin-right: 11px;
    fill: #fff;
    color: #fff;
}

.side-nav .side-sub {
    position: relative;
    height: 44px;
    padding-left: 22px;
}

.side-chev {
    position: absolute;
    top: 17px;
    left: 208px;
    width: 6px;
    height: 6px;
    border-left: 1px solid #ecf0f1;
    border-bottom: 1px solid #ecf0f1;
    transform: rotate(45deg);
}

/* top bar */
.main {
    flex: 1;
    display: flex;
    flex-direction: column;
    min-width: 0;
    background: #f0f1f5;
}

.topbar {
    flex: 0 0 45px;
    display: flex;
    align-items: center;
    justify-content: space-between;
    padding: 0 28px 0 18px;
    background: #2c3e50;
    color: #ecf0f1;
}

.burger span {
    display: block;
    width: 14px;
    height: 2px;
    margin: 2px 0;
    background: #fff;
}

.user-menu {
    display: flex;
    align-items: center;
    margin-top: -3px;
    font-size: 11.7px;
}

.user-caret {
    width: 0;
    height: 0;
    margin-left: 6px;
    border: 3.500px solid transparent;
    border-top: 4px solid #ecf0f1;
    border-bottom: 0;
}

.title-bar {
    flex: 0 0 45px;
    display: flex;
    align-items: center;
    justify-content: space-between;
    padding: 0 23px 0 18px;
    background: #fff;
    border-bottom: 1px solid #dcdcdc;
}

.title-bar h1 {
    margin: -3px 0 0;
    font-size: 22px;
    font-weight: 300;
    color: #797979;
}

.breadcrumb {
    display: flex;
    align-items: center;
    margin-top: 3px;
    font-size: 11.7px;
}

.crumb-chev {
    width: 5px;
    height: 5px;
    margin: 0 9px 0 6px;
    border-top: 1px solid #999;
    border-right: 1px solid #999;
    transform: rotate(45deg);
}

.crumb-chev:last-child {
    margin-right: 0;
}

/* panels */
.content {
    padding: 18px 18px 0;
}

.panel {
    margin-bottom: 18px;
    background: #fff;
    border: 1px solid #f39c4a;
}

.panel-head {
    height: 37px;
    margin: -1px -1px 0;
    padding: 0 14px;
    background: #f4994b;
    color: #fff;
    font-size: 16px;
    font-weight: 400;
    line-height: 35px;
}

/* form */
.article-form {
    padding: 18px 18px 0;
}

.article-form label {
    display: block;
    height: 21px;
    line-height: 18px;
}

.req {
    color: #f00;
}

.field {
    display: block;
    width: 100%;
    height: 30px;
    padding: 4px 14px;
    background: #fff;
    border: 1px solid #e5e5e5;
    border-radius: 0;
    outline: none;
    font-family: "Open Sans", sans-serif;
    font-size: 12px;
    color: #555;
}

.select-wrap {
    position: relative;
}

.select-wrap select {
    appearance: none;
}

.select-wrap::after {
    content: "";
    position: absolute;
    top: 12px;
    right: 6px;
    border: 3px solid transparent;
    border-top: 6px solid #555;
    border-bottom: 0;
    pointer-events: none;
}

.file-field {
    padding: 4px 12px;
    color: #999;
}

.file-field::file-selector-button {
    height: 19px;
    width: 81px;
    margin-right: 4px;
    padding: 0;
    border: 1px solid #767676;
    border-radius: 0;
    background: linear-gradient(#f5f5f5, #dedede);
    font: 13px "Liberation Sans", sans-serif;
    color: #111;
}

.note {
    height: 16px;
    margin: 0;
    padding-left: 135px;
    font-size: 11.7px;
    line-height: 18px;
    color: #ccc;
}

.area-field {
    height: 97px;
    resize: vertical;
}

/* summernote style editors */
.note-editor {
    height: 81px;
    border: 1px solid #a9a9a9;
}

.note-toolbar {
    display: flex;
    gap: 4.500px;
    height: 38px;
    padding: 4px 4px;
    background: #f5f5f5;
    border-bottom: 1px solid #a9a9a9;
}

.note-group {
    display: flex;
}

.nb {
    display: flex;
    align-items: center;
    justify-content: center;
    gap: 3px;
    height: 28px;
    padding: 0;
    background: #f0f0f0;
    border: 1px solid #e0e0e0;
    font-family: "Open Sans", sans-serif;
    font-size: 12px;
    color: #666;
}

.nb + .nb {
    border-left: 0;
}

.w17 { width: 17px; }
.w25 { width: 25px; }
.w26 { width: 26px; }
.w28 { width: 28px; }
.w29 { width: 29px; }
.w30 { width: 30px; }
.w31 { width: 31px; }
.w37 { width: 37px; }
.w40 { width: 40px; }
.w44 { width: 44px; }
.w53 { width: 53px; }

.nb-serif {
    font-family: "Liberation Serif", serif;
    font-size: 15px;
    font-weight: 400;
}

.nb-serif b {
    font-weight: 400;
}

.nb-code {
    font-size: 10px;
}

.hl {
    padding: 0 1px;
    background: #ff0;
    color: #000;
    font-weight: 700 !important;
    line-height: 13px;
}

.ni {
    width: 12px;
    height: 12px;
    fill: #777;
}

.ni-s {
    width: 11px;
}

.car {
    width: 0;
    height: 0;
    border: 3px solid transparent;
    border-top: 4px solid #666;
    border-bottom: 0;
}

.car-far {
    margin-left: 4px;
}

.note-body {
    height: 41px;
    background: #fff;
}

/* ckeditor style editor */
.cke {
    margin-top: 0;
    border: 1px solid #d1d1d1;
}

.cke-top {
    height: 97px;
    padding-top: 3px;
    background: #f8f8f8;
    border-bottom: 1px solid #d1d1d1;
}

.cke-row {
    display: flex;
    align-items: center;
    height: 30px;
    padding-left: 7px;
    color: #444;
}

.cke-row-first {
    padding-left: 12px;
}

.cke-row-last {
    padding-left: 9px;
}

.cb {
    position: relative;
    display: flex;
    flex: 0 0 25px;
    align-items: center;
    justify-content: center;
    height: 24px;
    font: 11px "Liberation Sans", sans-serif;
    color: #333;
}

.ci {
    width: 15px;
    height: 15px;
    fill: #444;
}

.c-mini {
    font: 8px "DejaVu Sans", sans-serif;
}

.c-mini2 {
    font: bold 6px "Liberation Sans", sans-serif;
}

.c-mini3 {
    font: 6px "Liberation Sans", sans-serif;
}

.cb-source {
    flex: 0 0 58px;
    justify-content: flex-start;
    gap: 3px;
    font-size: 12px;
    color: #474747;
}

.cb-source .ci {
    margin-left: -2px;
    width: 13px;
}

.cb-wide {
    flex: 0 0 30px;
    gap: 1px;
}

.cb-txt {
    font-size: 14px;
    color: #444;
}

.cb-txt sub,
.cb-txt sup {
    font-size: 7px;
}

.cb-serif {
    font-family: "Liberation Serif", serif;
}

.cb-quote {
    font: bold 26px/26px "Liberation Serif", serif;
    padding-top: 10px;
}

.cb-div {
    font: 7px/7px "Liberation Sans", sans-serif;
    text-align: center;
}

.cb-lang {
    flex: 0 0 32px;
    font: 13px "Noto Sans CJK TC", sans-serif;
    gap: 1px;
}

.cb-omega {
    font: bold 17px "Liberation Sans", sans-serif;
}

.cb-color {
    flex: 0 0 30px;
    gap: 2px;
}

.ca {
    font: bold 13px/14px "Liberation Sans", sans-serif;
    border-bottom: 2px solid #444;
}

.ca-bg {
    padding: 0 2px;
    background: #444;
    color: #f8f8f8;
    border-bottom: 0;
}

.cb-max {
    margin-left: 8px;
}

.cb-help {
    font: bold 18px "Liberation Sans", sans-serif;
    color: #555;
}

.cs {
    flex: 0 0 1px;
    height: 18px;
    margin: 0 2px;
    background: #d1d1d1;
}

.cgap {
    flex: 0 0 5px;
}

.cc {
    flex: 0 0 auto;
    width: 0;
    height: 0;
    border: 2px solid transparent;
    border-top: 3px solid #444;
    border-bottom: 0;
}

.combo {
    position: relative;
    display: flex;
    flex: 0 0 82px;
    align-items: center;
    justify-content: space-between;
    height: 24px;
    padding: 0 6px 0 8px;
    font: 11px "Liberation Sans", sans-serif;
    color: #474747;
}

.cke-body {
    height: 180px;
    background: #fff;
}

.cke-bottom {
    position: relative;
    height: 23px;
    background: #f8f8f8;
    border-top: 1px solid #d1d1d1;
}

.cke-resize {
    position: absolute;
    right: 2px;
    bottom: 3px;
    border-style: solid;
    border-width: 0 0 9px 9px;
    border-color: transparent transparent #bbb;
}

.form-actions {
    display: flex;
    justify-content: flex-end;
    margin: 19px -18px -1px 0;
}

.submit-box {
    width: 106px;
    height: 66px;
    padding: 18px 0 0 18px;
    background: #f9f9f9;
    position: relative;
}

.btn-submit {
    width: 65px;
    height: 30px;
    border: 0;
    background: #e74c3c;
    color: #fff;
    font-family: "Open Sans", sans-serif;
    font-size: 13px;
}

/* list */
.list-body {
    padding: 14px 13px 19px;
}

.list-tools {
    display: flex;
    align-items: flex-start;
    margin-bottom: 15px;
}

.records {
    display: flex;
    align-items: center;
    gap: 3px;
    font-size: 11.7px;
    color: #555;
}

.list-tools .records {
    flex: 1;
}

.records em {
    font-style: normal;
    color: #513a5e;
}

.select-small {
    width: 52px;
}

.select-small .field {
    height: 27px;
    padding: 0 12px;
    font-size: 12px;
}

.select-small::after {
    top: 10px;
}

.btn-print {
    width: 39px;
    height: 25px;
    margin-right: 72px;
    padding: 0;
    background: #fff;
    border: 1px solid #888;
    font-family: "Open Sans", sans-serif;
    font-size: 10px;
    color: #333;
}

.search-box {
    display: flex;
}

.search-box input {
    width: 153px;
    height: 27px;
    border: 1px solid #e5e5e5;
    outline: none;
}

.btn-search {
    width: 54px;
    height: 27px;
    padding: 0;
    background: #5cb85c;
    border: 1px solid #4cae4c;
    font-family: "Open Sans", sans-serif;
    font-size: 12px;
    color: #fff;
}

.articles {
    width: 100%;
    table-layout: fixed;
    border-collapse: separate;
    border-spacing: 0;
}

.col-no { width: 46px; }
.col-date { width: 198px; }
.col-title { width: 213px; }
.col-author { width: 248px; }
.col-year { width: 199px; }
.col-actions { width: 172px; }

.articles th {
    position: relative;
    height: 35px;
    padding: 0 15px;
    border-bottom: 1px solid #111;
    text-align: left;
    font-weight: 700;
    color: #777;
}

.articles .th-no {
    padding: 0 8px;
    background: #eee;
}

.sort {
    position: absolute;
    top: 11px;
    right: 6px;
    width: 7px;
    height: 13px;
}

.sort::before,
.sort::after {
    content: "";
    position: absolute;
    left: 0;
    border: 3.500px solid transparent;
}

.sort::before {
    top: 0;
    border-top: 0;
    border-bottom: 6px solid #ddd;
}

.sort::after {
    bottom: 0;
    border-bottom: 0;
    border-top: 6px solid #ddd;
}

.articles td {
    padding: 9px 8px 5px;
    border-bottom: 1px solid #eee;
    vertical-align: top;
    font-size: 11.7px;
    line-height: 16px;
    color: #797979;
}

.articles td:nth-child(3) {
    color: #80745f;
}

.articles .td-actions {
    padding: 8px 8px 6px;
}

.row-hover td {
    background: #f5f5f5;
}

.row-last td {
    border-bottom: 0;
}

.actions {
    display: flex;
    height: 18px;
    align-items: center;
    fill: #777;
    color: #777;
}

.a-edit {
    width: 18px;
    height: 16px;
    margin-right: 8px;
}

.a-check {
    width: 18px;
    height: 16px;
    margin-right: 8px;
}

.a-eye {
    width: 18px;
    height: 14px;
    margin-right: 3px;
}

.a-trash {
    width: 14px;
    height: 16px;
}

.row-hover .a-edit {
    fill: #e74c3c;
    color: #e74c3c;
}

.list-foot {
    display: flex;
    align-items: flex-start;
    justify-content: space-between;
    margin-top: 6px;
}

.pagination {
    display: flex;
    gap: 3px;
    list-style: none;
    margin: 5px 1px 0 0;
    padding: 0;
}

.pagination li {
    height: 29px;
    padding: 0 10.5px;
    background: #fff;
    border: 1px solid #e5e5e5;
    font-size: 11.7px;
    line-height: 27px;
    color: #e74c3c;
}

.pagination .page-muted {
    color: #797979;
}

.pagination .page-on {
    background: #e74c3c;
    border-color: #e74c3c;
    color: #fff;
}

.page-foot {
    height: 27px;
    padding-right: 18px;
    background: #2c3e50;
    color: #ecf0f1;
    font-size: 10.8px;
    line-height: 27px;
    text-align: right;
}
```
